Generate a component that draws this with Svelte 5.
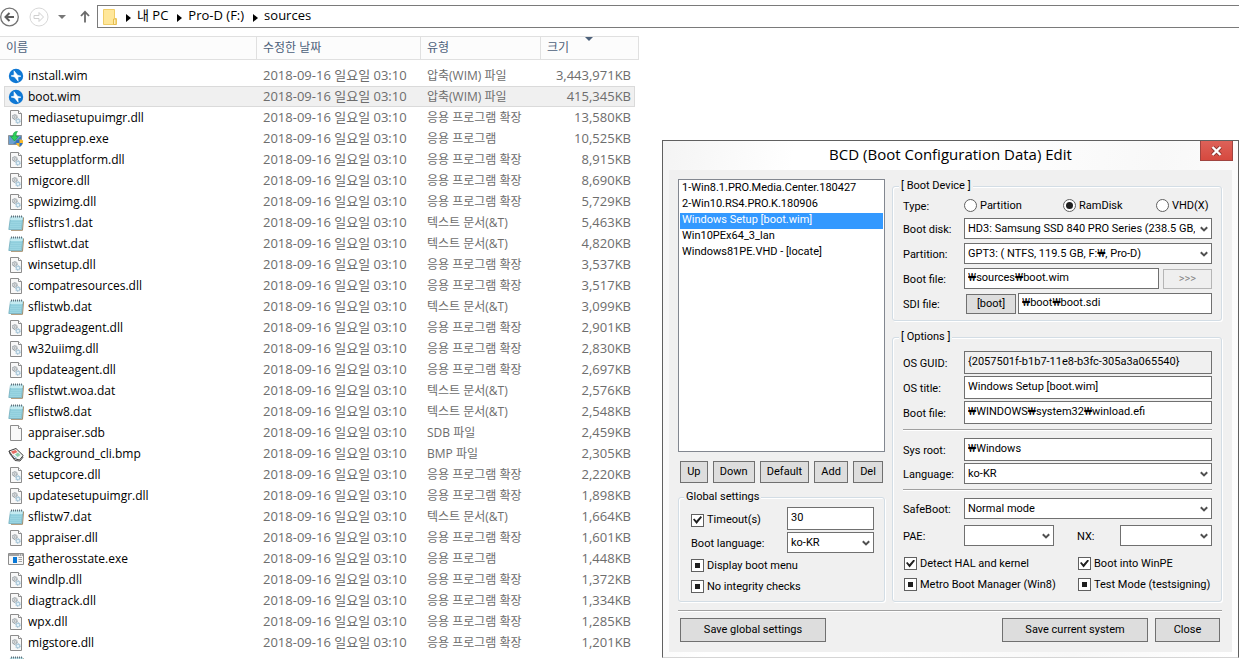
<script>
    const dll = "응용 프로그램 확장";
    const txt = "텍스트 문서(&T)";
    const modified = "2018-09-16 일요일 03:10";

    const files = [
        { name: "install.wim", icon: "wim", type: "압축(WIM) 파일", size: "3,443,971KB" },
        { name: "boot.wim", icon: "wim", type: "압축(WIM) 파일", size: "415,345KB", selected: true },
        { name: "mediasetupuimgr.dll", icon: "dll", type: dll, size: "13,580KB" },
        { name: "setupprep.exe", icon: "setup", type: "응용 프로그램", size: "10,525KB" },
        { name: "setupplatform.dll", icon: "dll", type: dll, size: "8,915KB" },
        { name: "migcore.dll", icon: "dll", type: dll, size: "8,690KB" },
        { name: "spwizimg.dll", icon: "dll", type: dll, size: "5,729KB" },
        { name: "sflistrs1.dat", icon: "dat", type: txt, size: "5,463KB" },
        { name: "sflistwt.dat", icon: "dat", type: txt, size: "4,820KB" },
        { name: "winsetup.dll", icon: "dll", type: dll, size: "3,537KB" },
        { name: "compatresources.dll", icon: "dll", type: dll, size: "3,517KB" },
        { name: "sflistwb.dat", icon: "dat", type: txt, size: "3,099KB" },
        { name: "upgradeagent.dll", icon: "dll", type: dll, size: "2,901KB" },
        { name: "w32uiimg.dll", icon: "dll", type: dll, size: "2,830KB" },
        { name: "updateagent.dll", icon: "dll", type: dll, size: "2,697KB" },
        { name: "sflistwt.woa.dat", icon: "dat", type: txt, size: "2,576KB" },
        { name: "sflistw8.dat", icon: "dat", type: txt, size: "2,548KB" },
        { name: "appraiser.sdb", icon: "blank", type: "SDB 파일", size: "2,459KB" },
        { name: "background_cli.bmp", icon: "bmp", type: "BMP 파일", size: "2,305KB" },
        { name: "setupcore.dll", icon: "dll", type: dll, size: "2,220KB" },
        { name: "updatesetupuimgr.dll", icon: "dll", type: dll, size: "1,898KB" },
        { name: "sflistw7.dat", icon: "dat", type: txt, size: "1,664KB" },
        { name: "appraiser.dll", icon: "dll", type: dll, size: "1,601KB" },
        { name: "gatherosstate.exe", icon: "exe", type: "응용 프로그램", size: "1,448KB" },
        { name: "windlp.dll", icon: "dll", type: dll, size: "1,372KB" },
        { name: "diagtrack.dll", icon: "dll", type: dll, size: "1,334KB" },
        { name: "wpx.dll", icon: "dll", type: dll, size: "1,285KB" },
        { name: "migstore.dll", icon: "dll", type: dll, size: "1,201KB" },
    ];

    const entries = [
        "1-Win8.1.PRO.Media.Center.180427",
        "2-Win10.RS4.PRO.K.180906",
        "Windows Setup [boot.wim]",
        "Win10PEx64_3_lan",
        "Windows81PE.VHD - [locate]",
    ];
    const deviceTypes = ["Partition", "RamDisk", "VHD(X)"];

    let entry = $state(entries[2]);
    let deviceType = $state("RamDisk");
    let timeout = $state("30");
    let bootFile = $state("₩sources₩boot.wim");
    let sdiFile = $state("₩boot₩boot.sdi");
    let guid = "{2057501f-b1b7-11e8-b3fc-305a3a065540}";
    let osTitle = $state("Windows Setup [boot.wim]");
    let loader = $state("₩WINDOWS₩system32₩winload.efi");
    let sysRoot = $state("₩Windows");
</script>

{#snippet fileIcon(kind)}
    <svg class="icon" viewBox="0 0 16 16" aria-hidden="true">
        {#if kind === "wim"}
            <circle cx="8" cy="8" r="7.200" fill="#0f78d4" />
            <path d="M6 2.800 9.600 7.200 13 8.200 9.800 9 10.200 13.200 6.600 8.900 3 7.900 6.200 7Z" fill="#fff" stroke="#fff" stroke-width=".6" />
        {:else if kind === "setup"}
            <path d="M.5 4.500H13.500V13.500H.5Z" fill="#4380bb" stroke="#8d9299" />
            <path d="M1 5H13L5 13H1Z" fill="#6a9fd0" />
            <path d="M9.500 .5C6 .5 5 2.500 5 5.500H2.500L6.500 10 10.500 5.500H8C8 3.500 8.200 2 9.500 .5Z" fill="#2fd05a" stroke="#119a39" stroke-width=".6" />
            <path d="M11.500 8 15.200 9.500C15.200 12.500 14 14.800 11.500 16 9 14.800 7.800 12.500 7.800 9.500Z" fill="#f4b82d" />
            <path d="M11.500 8V12H8.200L7.800 9.500ZM11.500 12H14.800C14 14 13 15.300 11.500 16Z" fill="#2c6fc2" />
        {:else if kind === "dat"}
            <path d="M3 15.300H14.500L15.500 2.500" fill="none" stroke="#a08863" />
            <path d="M2.500 2H14.800L13.700 14.500H.8Z" fill="#9ad5e2" stroke="#64a3b4" stroke-width=".7" />
            <path d="M2.500 2H14.800L14.500 5H2.200Z" fill="#c3eaf1" />
            <path d="M2.400 6.500H13.800M2.200 8.500H13.600M2 10.500H13.400M1.800 12.500H13.200" stroke="#82c5d5" stroke-width=".4" />
            <path d="M3.500 .5V2.500M5.500 .5V2.500M7.500 .5V2.500M9.500 .5V2.500M11.500 .5V2.500M13.500 .5V2.500" stroke="#4e6570" stroke-width=".9" />
        {:else if kind === "bmp"}
            <path d="M1 5 8 2.500 15.200 9.500 11.500 14 6 12.500Z" fill="#f7f7f5" stroke="#3d3d3d" />
            <path d="M3 5.500 7.500 4 9.500 6 5 8Z" fill="#e66b62" />
            <path d="M7 8.500 10 6.500 12.500 9 9.500 11Z" fill="#8bcfae" />
            <path d="M1 5 2 8 7 14.500 12 15 15.200 11" fill="none" stroke="#4b4b4b" />
            <path d="M5 9.500 9 12.500" stroke="#83b4d3" />
        {:else if kind === "exe"}
            <path d="M.5 2.500H15.500V13.500H.5Z" fill="#f7f7f7" stroke="#8c8c8c" />
            <path d="M1 3H15V5H1Z" fill="#a2a2a2" />
            <path d="M5 6H9V12H5Z" fill="#0878d7" />
            <path d="M10.500 6.500H14M10.500 8.500H14M10.500 10.500H14" stroke="#a4a4a4" />
            <path d="M11 4H12M13 4H14" stroke="#fff" />
        {:else}
            <path d="M2.500 .5H10.500L13.500 3.500V15.500H2.500Z" fill="#f8f8f8" stroke="#8c8c8c" />
            <path d="M10.500 .5V3.500H13.500" fill="#fff" stroke="#8c8c8c" />
            {#if kind === "dll"}
                <circle cx="6.800" cy="7" r="2.200" fill="#f0f0f0" stroke="#8d969c" stroke-width="1.300" stroke-dasharray="1 .4" />
                <circle cx="6.800" cy="7" r=".8" fill="#8d969c" />
                <circle cx="10" cy="11" r="2" fill="#e4f1f8" stroke="#8fb5cc" stroke-width="1.300" stroke-dasharray="1 .4" />
            {/if}
        {/if}
    </svg>
{/snippet}

{#snippet dropdown(id, value)}
    <span class="dropdown">
        <select {id}><option>{value}</option></select>
        <svg viewBox="0 0 8 6" aria-hidden="true">
            <path d="M.8 1.200 4 4.400 7.200 1.200" fill="none" stroke="#505050" stroke-width="2" />
        </svg>
    </span>
{/snippet}

{#snippet check(label, on)}
    <label class="check">
        <input type="checkbox" checked={on} indeterminate={!on} />
        {label}
    </label>
{/snippet}

<main>
    <nav>
        <button class="nav-button" aria-label="Back">
            <svg width="20" height="20" viewBox="0 0 20 20">
                <circle cx="9.500" cy="10" r="8.800" fill="#fff" stroke="#747474" stroke-width="1.300" />
                <path d="M14 10H5.500M9.500 6 5.500 10 9.500 14" fill="none" stroke="#5c5c5c" stroke-width="2" />
            </svg>
        </button>
        <button class="nav-button" aria-label="Forward">
            <svg width="20" height="20" viewBox="0 0 20 20">
                <circle cx="10" cy="10" r="9" fill="none" stroke="#d8d8d8" />
                <path d="M5 8.500H10V5.500L14.500 10 10 14.500V11.500H5Z" fill="none" stroke="#d0d0d0" />
            </svg>
        </button>
        <button class="nav-button recent" aria-label="Recent locations">
            <svg width="8" height="4" viewBox="0 0 8 4"><path d="M0 0H8L4 4Z" fill="#777" /></svg>
        </button>
        <button class="nav-button" aria-label="Up">
            <svg width="10" height="13" viewBox="0 0 10 13">
                <path d="M5 12.500V2M1 6 5 1.700 9 6" fill="none" stroke="#6b6b6b" stroke-width="1.800" />
            </svg>
        </button>
        <div class="address">
            <svg width="14" height="16" viewBox="0 0 14 16" aria-hidden="true">
                <path d="M.5 .5H11.500V9.500H13.500V15.500H.5Z" fill="#ffe79a" stroke="#f0cd68" />
                <path d="M10.500 10V15.500H13V10Z" fill="#fff0b8" stroke="#e6bd50" />
            </svg>
            {#each ["내 PC", "Pro-D (F:)", "sources"] as crumb}
                <svg class="arrow" width="5" height="8" viewBox="0 0 5 8" aria-hidden="true"><path d="M0 0 5 4 0 8Z" /></svg>
                <a href="#{crumb}">{crumb}</a>
            {/each}
        </div>
    </nav>

    <table>
        <thead>
            <tr>
                <th>이름</th>
                <th>수정한 날짜</th>
                <th>유형</th>
                <th class="sorted">크기</th>
            </tr>
        </thead>
        <tbody>
            {#each files as file (file.name)}
                <tr class:selected={file.selected}>
                    <td class="name">{@render fileIcon(file.icon)}{file.name}</td>
                    <td>{modified}</td>
                    <td class="type">{file.type}</td>
                    <td class="size">{file.size}</td>
                </tr>
            {/each}
            <tr><td class="name">{@render fileIcon("dat")}</td></tr>
        </tbody>
    </table>

    <div class="dialog" role="dialog" aria-labelledby="dialog-title">
        <header>
            <h1 id="dialog-title">BCD (Boot Configuration Data) Edit</h1>
            <button class="close" aria-label="Close window">
                <svg width="11" height="10" viewBox="0 0 11 10">
                    <path d="M1.500 1 9.500 9M9.500 1 1.500 9" stroke="#8b3530" stroke-width="4" />
                    <path d="M1.500 1 9.500 9M9.500 1 1.500 9" stroke="#fff" stroke-width="2.400" />
                </svg>
            </button>
        </header>

        <div class="panel">
            <div class="columns">
                <div class="left">
                    <select class="entries" size="10" aria-label="Boot entries" bind:value={entry}>
                        {#each entries as item}
                            <option value={item}>{item}</option>
                        {/each}
                    </select>
                    <div class="actions">
                        <button>Up</button>
                        <button>Down</button>
                        <button>Default</button>
                        <button>Add</button>
                        <button>Del</button>
                    </div>
                    <fieldset class="global">
                        <legend>Global settings</legend>
                        <div class="pair">
                            {@render check("Timeout(s)", true)}
                            <input class="tall" type="text" aria-label="Timeout in seconds" bind:value={timeout} />
                        </div>
                        <div class="pair">
                            <label for="boot-language">Boot language:</label>
                            {@render dropdown("boot-language", "ko-KR")}
                        </div>
                        {@render check("Display boot menu", false)}
                        {@render check("No integrity checks", false)}
                    </fieldset>
                </div>

                <div class="right">
                    <fieldset class="device">
                        <legend>[ Boot Device ]</legend>
                        <div class="row types">
                            <span>Type:</span>
                            <div class="radios">
                                {#each deviceTypes as type}
                                    <label>
                                        <input type="radio" name="type" value={type} bind:group={deviceType} />
                                        {type}
                                    </label>
                                {/each}
                            </div>
                        </div>
                        <div class="row">
                            <label for="disk">Boot disk:</label>
                            {@render dropdown("disk", "HD3: Samsung SSD 840 PRO Series (238.5 GB, ")}
                        </div>
                        <div class="row">
                            <label for="partition">Partition:</label>
                            {@render dropdown("partition", "GPT3: ( NTFS, 119.5 GB, F:₩, Pro-D)")}
                        </div>
                        <div class="row">
                            <label for="boot-file">Boot file:</label>
                            <div class="group">
                                <input id="boot-file" type="text" bind:value={bootFile} />
                                <button class="browse" disabled>&gt;&gt;&gt;</button>
                            </div>
                        </div>
                        <div class="row">
                            <label for="sdi">SDI file:</label>
                            <div class="group sdi">
                                <button>[boot]</button>
                                <input id="sdi" type="text" bind:value={sdiFile} />
                            </div>
                        </div>
                    </fieldset>

                    <fieldset class="options">
                        <legend>[ Options ]</legend>
                        <div class="row">
                            <label for="guid">OS GUID:</label>
                            <input class="tall" id="guid" type="text" value={guid} readonly />
                        </div>
                        <div class="row">
                            <label for="title">OS title:</label>
                            <input class="tall" id="title" type="text" bind:value={osTitle} />
                        </div>
                        <div class="row">
                            <label for="loader">Boot file:</label>
                            <input class="tall" id="loader" type="text" bind:value={loader} />
                        </div>
                        <hr />
                        <div class="row">
                            <label for="root">Sys root:</label>
                            <input class="tall" id="root" type="text" bind:value={sysRoot} />
                        </div>
                        <div class="row">
                            <label for="language">Language:</label>
                            {@render dropdown("language", "ko-KR")}
                        </div>
                        <hr />
                        <div class="row">
                            <label for="safeboot">SafeBoot:</label>
                            {@render dropdown("safeboot", "Normal mode")}
                        </div>
                        <div class="row flags">
                            <label for="pae">PAE:</label>
                            {@render dropdown("pae", "")}
                            <label class="nx" for="nx">NX:</label>
                            {@render dropdown("nx", "")}
                        </div>
                        <div class="checks">
                            {@render check("Detect HAL and kernel", true)}
                            {@render check("Boot into WinPE", true)}
                            {@render check("Metro Boot Manager (Win8)", false)}
                            {@render check("Test Mode (testsigning)", false)}
                        </div>
                    </fieldset>
                </div>
            </div>

            <hr />
            <footer>
                <button class="save">Save global settings</button>
                <button class="save current">Save current system</button>
                <button class="done">Close</button>
            </footer>
        </div>
    </div>
</main>

<style>
    :global(body) {
        background: #fff;
        overflow: hidden;
    }
    main {
        position: relative;
        height: 100vh;
        overflow: hidden;
        font: 13px/20px "Open Sans", "Noto Sans CJK KR", sans-serif;
        color: #000;
    }
    *,
    *::before,
    *::after {
        box-sizing: border-box;
    }
    button,
    input,
    select {
        margin: 0;
        font: inherit;
        color: inherit;
        border-radius: 0;
    }
    svg {
        display: block;
        flex: none;
    }

    nav {
        display: flex;
        align-items: center;
        gap: 9px;
        padding-top: 5px;
    }
    .nav-button {
        padding: 0;
        border: 0;
        background: none;
    }
    .recent {
        margin-right: 5px;
    }
    .address {
        flex: 1;
        display: flex;
        align-items: center;
        height: 23px;
        margin-left: -2px;
        padding-left: 5px;
        border: 1px solid #7a7a7a;
        border-right: 0;
    }
    .address a {
        margin-top: -3px;
        color: #000;
        text-decoration: none;
    }
    .arrow {
        margin: 2px 6px 0 9px;
    }

    table {
        display: block;
        max-width: 639px;
        margin-top: 8px;
        color: #6d6d6d;
    }
    thead,
    tbody {
        display: block;
    }
    tr {
        display: grid;
        grid-template-columns: 253px 164px 120px 1fr;
    }
    thead tr {
        grid-template-columns: 257px 164px 120px 1fr;
        margin-bottom: 5px;
        border: solid #e0e0e0;
        border-width: 1px 0;
        background: #fcfcfc;
    }
    tbody tr {
        height: 21px;
        margin: 0 4px;
    }
    tbody tr.selected {
        background: #f0f0f0;
        box-shadow: inset 0 0 0 1px #dadada;
    }
    th {
        height: 22px;
        padding: 1px 6px 0;
        border-right: 1px solid #e0e0e0;
        color: #4c607a;
        font-size: 12px;
        font-weight: normal;
        text-align: left;
    }
    .sorted {
        position: relative;
    }
    .sorted::before {
        content: "";
        position: absolute;
        top: 0;
        left: 45%;
        border: 4px solid transparent;
        border-top-color: #4c607a;
        border-bottom: 0;
    }
    td {
        padding: 0 6px;
        white-space: nowrap;
    }
    .name {
        display: flex;
        align-items: center;
        gap: 4px;
        padding: 0 4px;
        color: #000;
    }
    .name,
    .type {
        font-size: 12px;
    }
    .type {
        padding-top: 1px;
    }
    .icon {
        width: 16px;
        height: 16px;
    }
    .size {
        padding-right: 4px;
        text-align: right;
    }

    .dialog {
        position: absolute;
        top: 140px;
        right: 0;
        width: 577px;
        padding: 0 6px 5px;
        border: 1px solid #606060;
        border-bottom-color: #d5d5d5;
        background: linear-gradient(100deg, #f4f4f4, #fff 20%, #fff 45%, #f8f8f8 75%, #fff);
        font: 11px/14px Roboto, "Noto Sans CJK KR", sans-serif;
    }
    header {
        display: flex;
        height: 29px;
    }
    h1 {
        flex: 1;
        margin: 0;
        padding-left: 32px;
        font: 15px/26px "Open Sans", sans-serif;
        text-align: center;
    }
    .close {
        display: grid;
        place-items: center;
        width: 33px;
        height: 20px;
        margin-right: -1px;
        padding: 0;
        border: 1px solid #a04440;
        border-top: 0;
        background: linear-gradient(#dd6259, #d6493f);
    }
    .panel {
        padding: 9px 10px 10px 9px;
        background: #f0f0f0;
    }
    .columns {
        display: grid;
        grid-template-columns: 207px 1fr;
        gap: 7px;
    }
    .left,
    .right {
        display: flex;
        flex-direction: column;
    }

    .entries {
        height: 273px;
        padding: 1px;
        border: 1px solid #828790;
        background: #fff;
        outline: 0;
        overflow: hidden;
    }
    .entries option {
        min-height: 16px;
        padding: 0 2px;
        line-height: 16px;
    }
    .entries option:checked {
        background: #3399ff linear-gradient(#3399ff, #3399ff);
        -webkit-text-fill-color: #fff;
    }
    .actions {
        display: flex;
        gap: 5px;
        margin: 9px 2px 8px;
    }
    .panel button {
        height: 22px;
        padding: 0 2px;
        border: 1px solid #707070;
        background: #dddddd;
        white-space: nowrap;
    }
    .actions button {
        flex: 1 1 auto;
    }

    fieldset {
        min-width: 0;
        margin: 0;
        padding: 0 9px 6px 10px;
        border: 1px solid #d3dde5;
        border-radius: 3px;
        box-shadow: inset 1px 1px #fff, 1px 1px #fff;
    }
    legend {
        margin-left: -4px;
        padding: 0 2px;
        background: #f0f0f0;
    }
    .global {
        margin-top: -1px;
        padding: 3px 10px 4px 12px;
    }
    .global legend {
        margin-left: -7px;
    }
    .global .check {
        height: 21px;
    }
    .pair {
        display: grid;
        grid-template-columns: 1fr 87px;
        align-items: center;
        margin-bottom: 2px;
    }

    input[type="text"] {
        width: 100%;
        min-width: 0;
        height: 21px;
        padding: 0 3px 2px;
        border: 1px solid #707070;
        background: #fff;
        outline: 0;
    }
    input[type="text"].tall {
        height: 23px;
    }
    input[readonly] {
        background: #f0f0f0;
    }
    .dropdown {
        position: relative;
        display: block;
    }
    .dropdown select {
        display: block;
        width: 100%;
        height: 21px;
        padding: 0 16px 0 3px;
        appearance: none;
        border: 1px solid #707070;
        background: #fff;
    }
    .dropdown svg {
        position: absolute;
        top: 8px;
        right: 4px;
        width: 8px;
        height: 6px;
        pointer-events: none;
    }

    .row {
        display: grid;
        grid-template-columns: 61px 1fr;
        align-items: center;
    }
    .row > label,
    .row > span:first-child,
    .pair > label {
        padding-top: 3px;
    }
    .device,
    .options {
        display: grid;
    }
    .device {
        gap: 4px;
    }
    .types {
        height: 21px;
        margin: 2px 0 -2px;
    }
    .radios {
        display: grid;
        grid-template-columns: 99px 93px 1fr;
        white-space: nowrap;
    }
    .radios label,
    .check {
        display: flex;
        align-items: center;
        gap: 3px;
        white-space: nowrap;
    }
    .group {
        display: grid;
        grid-template-columns: 1fr 49px;
        gap: 4px;
        align-items: center;
    }
    .sdi {
        grid-template-columns: 50px 1fr;
        gap: 2px;
        padding-left: 2px;
    }
    .panel .group button {
        height: 20px;
    }
    .panel .browse {
        border-color: #b5b5b5;
        background: #efefef;
        color: #858585;
    }

    .options {
        gap: 2px;
        margin-top: 9px;
        padding-top: 7px;
    }
    hr {
        width: 100%;
        height: 2px;
        margin: 3px 0 5px;
        border: 0;
        border-top: 1px solid #a0a0a0;
        background: #fff;
    }
    .flags {
        grid-template-columns: 61px 90px 66px 1fr;
        margin-top: 4px;
    }
    .nx {
        padding-left: 23px;
    }
    .checks {
        display: grid;
        grid-template-columns: 174px 1fr;
        margin-top: 5px;
        padding-left: 1px;
    }
    .checks .check {
        height: 21px;
    }

    input[type="checkbox"],
    input[type="radio"] {
        flex: none;
        display: grid;
        place-items: center;
        width: 13px;
        height: 13px;
        appearance: none;
        border: 1px solid #606060;
        background: #fff;
    }
    input[type="radio"] {
        border-radius: 50%;
    }
    input[type="radio"]:checked::before {
        content: "";
        width: 7px;
        height: 7px;
        border-radius: 50%;
        background: #202020;
    }
    input[type="checkbox"]:checked::before {
        content: "";
        width: 9px;
        height: 8px;
        background: #202020;
        clip-path: polygon(0 45%, 15% 30%, 38% 58%, 85% 0, 100% 15%, 40% 100%);
    }
    input[type="checkbox"]:indeterminate::before {
        content: "";
        width: 5px;
        height: 5px;
        background: #202020;
    }

    .panel > hr {
        margin: 8px 0 6px;
    }
    footer {
        display: flex;
        gap: 7px;
        padding: 0 2px;
    }
    .panel footer button {
        height: 24px;
    }
    .save {
        width: 146px;
    }
    .current {
        margin-left: auto;
    }
    .done {
        width: 65px;
    }
</style>
